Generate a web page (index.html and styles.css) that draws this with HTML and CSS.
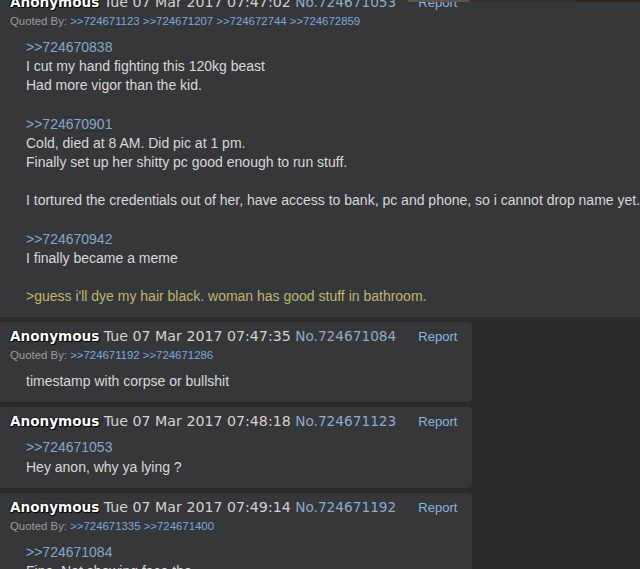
FILE: index.html
```html
<!DOCTYPE html>
<html>
<head>
<meta charset="utf-8">
<link rel="stylesheet" href="styles.css">
</head>
<body>
<div class="strip"></div>
<div class="thread">
  <div class="post">
    <div class="header"><span class="name">Anonymous</span> <span class="date">Tue 07 Mar 2017 07:47:02</span> <span class="num">No.724671053</span><span class="report">Report</span></div>
    <div class="backlinks">Quoted By: <a>&gt;&gt;724671123</a> <a>&gt;&gt;724671207</a> <a>&gt;&gt;724672744</a> <a>&gt;&gt;724672859</a></div>
    <blockquote class="body"><a class="ql">&gt;&gt;724670838</a><br>I cut my hand fighting this 120kg beast<br>Had more vigor than the kid.<br><br><a class="ql">&gt;&gt;724670901</a><br>Cold, died at 8 AM. Did pic at 1 pm.<br>Finally set up her shitty pc good enough to run stuff.<br><br>I tortured the credentials out of her, have access to bank, pc and phone, so i cannot drop name yet.<br><br><a class="ql">&gt;&gt;724670942</a><br>I finally became a meme<br><br><span class="green">&gt;guess i'll dye my hair black. woman has good stuff in bathroom.</span></blockquote>
  </div>
  <div class="post">
    <div class="header"><span class="name">Anonymous</span> <span class="date">Tue 07 Mar 2017 07:47:35</span> <span class="num">No.724671084</span><span class="report">Report</span></div>
    <div class="backlinks">Quoted By: <a>&gt;&gt;724671192</a> <a>&gt;&gt;724671286</a></div>
    <blockquote class="body">timestamp with corpse or bullshit</blockquote>
  </div>
  <div class="post">
    <div class="header"><span class="name">Anonymous</span> <span class="date">Tue 07 Mar 2017 07:48:18</span> <span class="num">No.724671123</span><span class="report">Report</span></div>
    <blockquote class="body"><a class="ql">&gt;&gt;724671053</a><br>Hey anon, why ya lying ?</blockquote>
  </div>
  <div class="post">
    <div class="header"><span class="name">Anonymous</span> <span class="date">Tue 07 Mar 2017 07:49:14</span> <span class="num">No.724671192</span><span class="report">Report</span></div>
    <div class="backlinks">Quoted By: <a>&gt;&gt;724671335</a> <a>&gt;&gt;724671400</a></div>
    <blockquote class="body"><a class="ql">&gt;&gt;724671084</a><br>Fine. Not showing face tho</blockquote>
  </div>
</div>
</body>
</html>
```
FILE: styles.css
```css
html, body {
  margin: 0;
  padding: 0;
  overflow: hidden;
  background: #2a2b2f;
}
body {
  font-family: "Liberation Sans", Arial, sans-serif;
  font-size: 14px;
  color: #d8d8d8;
  height: 569px;
  position: relative;
}
.strip {
  position: absolute;
  top: 0;
  left: 408px;
  width: 232px;
  height: 2px;
  background: linear-gradient(90deg, #5b524a 0, #5b524a 26%, #3b3029 27%, #3b3029 72%, #2a2420 73%);
  z-index: 2;
}
.thread {
  margin: -12px 0 0 -5px;
  display: flex;
  flex-direction: column;
  align-items: flex-start;
  gap: 5px;
}
.post {
  background: #36373b;
  border-radius: 4px;
  padding: 4px 15px 4px 15px;
  width: max-content;
}
.header {
  font-family: "DejaVu Sans", Verdana, sans-serif;
  font-size: 14px;
  line-height: 20px;
  height: 20px;
  white-space: nowrap;
}
.header span {
  line-height: 1;
}
.name {
  font-size: 13.6px;
  font-weight: bold;
  color: #ffffff;
  text-shadow: 0 0 1px #000, 1px 1px 1px #000, -1px 0 1px #111;
}
.date {
  font-size: 14.2px;
  color: #d2d2d2;
}
.num {
  font-size: 13.7px;
  color: #93a9c2;
}
.report {
  font-family: "Liberation Sans", Arial, sans-serif;
  font-size: 13px;
  color: #8db2dc;
  margin-left: 22px;
}
.backlinks {
  font-size: 11.4px;
  line-height: 19px;
  color: #9b9b9b;
}
.backlinks a {
  color: #7fa6d6;
}
.body {
  margin: 7px 40px 7px 16px;
  line-height: 19.15px;
  white-space: nowrap;
}
.ql {
  color: #87a5c6;
}
.green {
  color: #bcb86a;
}
```
